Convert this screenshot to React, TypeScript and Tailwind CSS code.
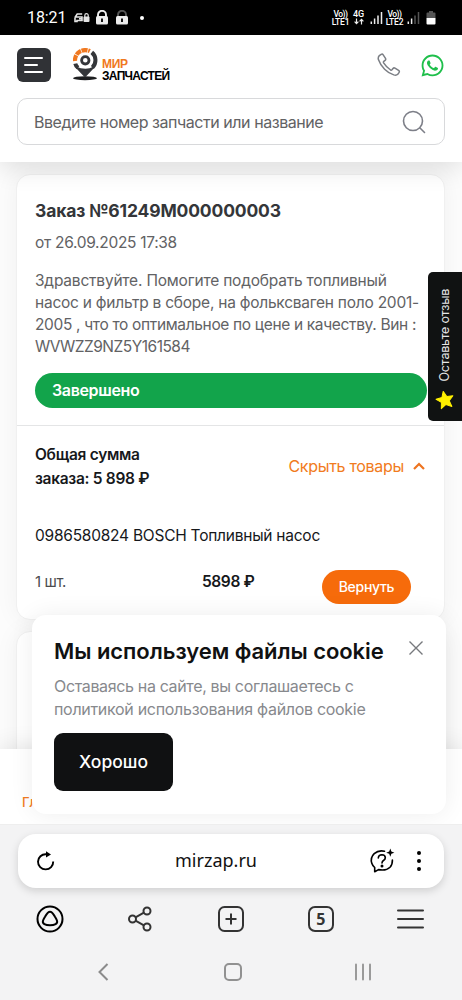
import { FaWhatsapp } from "react-icons/fa"

function StatusBar() {
	return (
		<div className="flex h-[35px] shrink-0 items-center bg-black pl-[27px] text-white">
			<span className="w-[47px] font-['Roboto'] text-[16px] leading-[20px] tracking-[-0.1px]">18:21</span>
			<svg width="16" height="12" viewBox="0 0 16 12" className="mt-[1px]">
				<path d="M1 5.500 3.200 2h5M1 5.500v4h2v-1h5V5H1.500M5 6.700h3" fill="none" stroke="#e5e5e5" strokeWidth="1.600" />
				<rect x="9.500" y="4.500" width="6" height="5.500" rx="1" fill="#e5e5e5" />
				<path d="M10.800 5V3.400a1.700 1.700 0 0 1 3.400 0V5" fill="none" stroke="#e5e5e5" strokeWidth="1.200" />
			</svg>
			<Lock className="ml-[5px]" shackle="#eee" />
			<Lock className="ml-[6px]" shackle="#555" />
			<span className="ml-[11px] size-[4px] rounded-full bg-white" />
			<div className="ml-[188px] flex items-center">
				<Lte top="Vo))" bottom="LTE1" />
				<div className="ml-[4px] flex w-[11px] flex-col items-center font-['Roboto'] text-[9px] leading-[8px] font-medium">
					<span>4G</span>
					<svg width="10" height="7" viewBox="0 0 10 7" fill="none" stroke="#eee" strokeWidth="1.200">
						<path d="M2.500.5v5M.6 3.700l1.900 2 1.900-2M7.500 6.500v-5M5.600 3.300l1.900-2 1.900 2" />
					</svg>
				</div>
				<Signal className="ml-[6px]" weak={false} />
				<Lte top="Vo))" bottom="LTE2" className="ml-[3px]" />
				<Signal className="ml-[4px]" weak />
				<svg width="10" height="14" viewBox="0 0 10 14" className="ml-[6px]">
					<path d="M3 0h4v1.500h1.500q1 0 1 1V7H.5V2.500q0-1 1-1H3z" fill="#555" />
					<path d="M.5 7h9v5.500q0 1-1 1h-7q-1 0-1-1z" fill="#fff" />
				</svg>
			</div>
		</div>
	)
}

function Lock({ className, shackle }: { className: string; shackle: string }) {
	return (
		<svg width="14" height="15" viewBox="0 0 14 15" className={className}>
			<path d="M3 7V4.800a4 4 0 0 1 8 0V7" fill="none" stroke={shackle} strokeWidth="1.900" />
			<rect x="1" y="6" width="12" height="8.500" rx="1.500" fill="#eee" />
			<path d="M7 8.500v3.500" stroke="#000" strokeWidth="1.800" />
		</svg>
	)
}

function Lte({ top, bottom, className = "" }: { top: string; bottom: string; className?: string }) {
	return (
		<div className={`${className} flex w-[17px] flex-col items-center font-['Roboto'] text-[8.5px] leading-[8px] font-medium whitespace-nowrap`}>
			<span className="tracking-[-0.5px]">{top}</span>
			<span className="tracking-[-0.2px]">{bottom}</span>
		</div>
	)
}

function Signal({ weak, className }: { weak: boolean; className: string }) {
	const dim = weak ? "#555" : "#eee"
	return (
		<svg width="13" height="14" viewBox="0 0 13 14" className={className}>
			<path d="M1.300 10.500V13M4.600 7.500V13" stroke="#eee" strokeWidth="1.500" />
			<path d="M8 4.500V13M11.500 1V13" stroke={dim} strokeWidth="1.500" />
		</svg>
	)
}

function Logo() {
	return (
		<svg width="26" height="34" viewBox="0 0 26 34" className="ml-[22px]">
			<ellipse cx="12" cy="30.200" rx="12" ry="2" fill="#1d1e20" />
			<path d="M3.500 19.500 12 28.500l8.500-9Q17 21.500 12.500 21.500 7 21.500 3.500 19.500z" fill="#34363a" stroke="#34363a" strokeWidth="1.500" />
			<path d="M18.800 4.400A10.200 10.200 0 0 1 19.400 19.500" fill="none" stroke="#34363a" strokeWidth="4" />
			<path d="M5 19.800Q2.800 18 2.300 15.600" fill="none" stroke="#34363a" strokeWidth="4" />
			<path d="M2 13A10.200 10.200 0 0 1 16.800 3.200" fill="none" stroke="#f07820" strokeWidth="4.200" strokeDasharray="5.800 .7" />
			<circle cx="12.300" cy="12.300" r="3.700" fill="none" stroke="#34363a" strokeWidth="2.800" />
		</svg>
	)
}

function Header() {
	return (
		<header className="relative z-10 h-[127px] shrink-0 bg-white px-[17px] pt-[13px] shadow-[0_6px_24px_rgba(0,0,0,0.12)]">
			<div className="flex h-[34px] items-center">
				<button className="flex size-[34px] flex-col justify-center gap-[5px] rounded-[6px] bg-[#303236] pl-[7px]">
					<span className="h-[2px] w-[19px] rounded bg-white" />
					<span className="h-[2px] w-[14px] rounded bg-white" />
					<span className="h-[2px] w-[19px] rounded bg-white" />
				</button>
				<Logo />
				<div className="mt-[10px] ml-[3px] font-['Liberation_Sans'] text-[12px] leading-[12px] font-bold">
					<div className="tracking-[-0.3px] text-[#f07820]">МИР</div>
					<div className="tracking-[-0.7px] text-black">ЗАПЧАСТЕЙ</div>
				</div>
				<svg width="24" height="24" viewBox="0 0 24 24" className="ml-auto" fill="none" stroke="#7b7e84" strokeWidth="1.500" strokeLinejoin="round">
					<path d="M2.300 2.600 4.200 1.300q1.200-.7 2 .5l2.300 3.600q.6 1.200-.4 2l-1.300 1q-.6.6-.2 1.400 2.800 4.300 7 7.200.8.4 1.400-.2l1-1.300q.8-1 2-.4l3.600 2.300q1.200.8.5 2l-1.300 1.900q-1.400 1.300-4 .6-5-1.500-9.200-5.700Q3 11.500 1.400 6.600.8 4 2.300 2.600z" />
				</svg>
				<FaWhatsapp className="ml-[19px] size-[25px] text-[#1fbf4b]" />
			</div>
			<div className="mt-[16px] flex h-[47px] items-center justify-between rounded-[10px] border border-[#d8d9db] pr-[18px] pl-[16px]">
				<span className="text-[16px] tracking-[-0.45px] text-[#626264]">Введите номер запчасти или название</span>
				<svg width="24" height="24" viewBox="0 0 24 24" fill="none" stroke="#7d7f88" strokeWidth="1.600" strokeLinecap="round">
					<circle cx="11" cy="11" r="9.500" />
					<path d="m18 18 4.500 4.500" />
				</svg>
			</div>
		</header>
	)
}

function OrderCard() {
	return (
		<section className="-ml-px h-[446px] shrink-0 rounded-[14px] border border-[#f0f0f0] bg-white shadow-[0_0_24px_rgba(0,0,0,0.05)]">
			<div className="h-[251px] border-b border-[#e4e5e6] pr-[17px] pl-[18px] pt-[23px]">
				<h1 className="text-[17.5px] leading-[26px] font-bold tracking-[-0.15px] whitespace-nowrap text-[#343639]">Заказ №61249M000000003</h1>
				<p className="mt-[7px] text-[15.5px] leading-[24px] tracking-[-0.3px] text-[#626264]">от 26.09.2025 17:38</p>
				<p className="mt-[15px] text-[15.5px] leading-[22px] tracking-[-0.2px] whitespace-nowrap text-[#626264]">
					Здравствуйте. Помогите подобрать топливный<br />
					<span className="tracking-[-0.24px]">насос и фильтр в сборе, на фольксваген поло 2001-</span><br />
					<span className="tracking-[-0.34px]">2005 , что то оптимальное по цене и качеству. Вин :</span><br />
					<span className="tracking-[-0.5px]">WVWZZ9NZ5Y161584</span>
				</p>
				<div className="mt-[15px] flex h-[35px] items-center rounded-full bg-[#12a44b] pb-px pl-[17px] text-[16px] font-semibold tracking-[-0.35px] text-white">Завершено</div>
			</div>
			<div className="pt-[17px] pr-[17px] pl-[18px] text-[#16181b]">
				<div className="flex items-center justify-between">
					<p className="text-[15.5px] leading-[24px] font-semibold tracking-[-0.3px]">Общая сумма<br />заказа: 5 898 ₽</p>
					<button className="-mt-[2px] flex items-center gap-[9px] pr-[2px] text-[16px] tracking-[-0.3px] text-[#f17b20]">
						Скрыть товары
						<svg width="12" height="8" viewBox="0 0 12 8" fill="none" stroke="#ee7420" strokeWidth="2.200"><path d="m1 7 5-5 5 5" /></svg>
					</button>
				</div>
				<p className="mt-[33px] text-[15.5px] leading-[24px] tracking-[-0.24px] whitespace-nowrap">0986580824 BOSCH Топливный насос</p>
				<div className="mt-[22px] flex h-[34px]">
					<span className="w-[167px] pt-px text-[15px] leading-[22px] tracking-[-0.4px] text-[#4c4c4e]">1 шт.</span>
					<span className="w-[120px] pt-px text-[15.5px] leading-[22px] font-semibold tracking-[-0.4px]">5898 ₽</span>
					<button className="h-[34px] w-[89px] rounded-full bg-[#f66b0b] pb-[2px] text-[14px] font-medium tracking-[-0.3px] text-white">Вернуть</button>
				</div>
			</div>
		</section>
	)
}

function CookieNotice() {
	return (
		<div className="absolute top-[615px] left-[32px] z-20 h-[199px] w-[414px] rounded-[14px] bg-white pt-[19px] pl-[22px] shadow-[0_0_24px_rgba(0,0,0,0.07)]">
			<h2 className="text-[22px] leading-[34px] font-semibold tracking-[-0.05px] whitespace-nowrap text-[#101112]">Мы используем файлы cookie</h2>
			<p className="mt-[7px] text-[16px] leading-[23px] tracking-[-0.3px] whitespace-nowrap text-[#87898d]">
				<span className="tracking-[-0.35px]">Оставаясь на сайте, вы соглашаетесь с</span><br />политикой использования файлов cookie
			</p>
			<button className="mt-[12px] h-[58px] w-[119px] rounded-[9px] bg-[#101112] text-[17.5px] font-medium text-white">Хорошо</button>
			<svg width="14" height="14" viewBox="0 0 14 14" className="absolute top-[26px] right-[23px]" stroke="#77797d" strokeWidth="1.400"><path d="m.5.5 13 13M13.500.5l-13 13" /></svg>
		</div>
	)
}

function ReviewTab() {
	return (
		<div className="absolute top-[272px] right-0 z-20 flex h-[149px] w-[34px] flex-col items-center justify-end gap-[8px] rounded-l-[5px] bg-[#101212] pb-[11px]">
			<span className="rotate-180 text-[12.5px] leading-[16px] tracking-[-0.2px] whitespace-nowrap text-[#e8e8e8] [writing-mode:vertical-rl]">Оставьте отзыв</span>
			<svg width="20" height="20" viewBox="0 0 20 20" className="-rotate-12" fill="#fff000" stroke="#fff000" strokeWidth="1" strokeLinejoin="round">
				<path d="m10 1.200 2.500 5.700 6.100.6-4.600 4.100 1.400 6.100L10 14.500l-5.400 3.200L6 11.600 1.400 7.500l6.100-.6z" />
			</svg>
		</div>
	)
}

function BrowserBar() {
	return (
		<footer className="relative z-30 flex h-[176px] shrink-0 flex-col border-t border-[#eeeeee] bg-[#f3f3f4] px-[18px] pt-[9px]">
			<div className="grid h-[54px] grid-cols-[50px_1fr_50px_24px_13px] items-center rounded-[18px] bg-white shadow-[0_3px_8px_rgba(0,0,0,0.15)]">
				<svg width="20" height="20" viewBox="0 0 20 20" className="ml-[18px]" fill="none" stroke="#000" strokeWidth="1.900">
					<path d="M17.200 10.500A7.600 7.600 0 1 1 10 3.200h2" />
					<path d="m10 .3 5 3.200-5 2.900z" fill="#000" stroke="none" />
				</svg>
				<span className="pr-px pb-[3px] pl-[8px] text-center font-['Noto_Sans'] text-[18px] leading-[24px] text-[#111]">mirzap.ru</span>
				<svg width="26" height="26" viewBox="0 0 26 26" className="ml-[12px]" fill="none" stroke="#000" strokeWidth="1.600" strokeLinecap="round" strokeLinejoin="round">
					<path d="M15.500 3.200Q9.500 1.800 5.200 5.600 1 9.800 2.800 15.200 3.500 17.500 5.700 19.500v4.300l3.800-2.200q7.500 1.600 11.500-2.400 2.600-2.800 2.400-7.200" />
					<path d="M9.300 10q.2-3.300 3.600-3.300 3.400.1 3.400 3.100 0 1.700-1.800 2.700-1.400.8-1.500 2.500" />
					<circle cx="13" cy="18" r=".7" fill="#000" />
					<path d="m21.300.6 1.100 3 3 1.100-3 1.100-1.100 3-1.100-3-3-1.100 3-1.100z" fill="#000" stroke="none" />
				</svg>
				<div className="ml-[10px] flex w-[4px] flex-col gap-[4px]">
					<span className="size-[4px] rounded-full bg-black" />
					<span className="size-[4px] rounded-full bg-black" />
					<span className="size-[4px] rounded-full bg-black" />
				</div>
			</div>
			<div className="mt-[17px] flex h-[28px] items-center justify-between pr-[20px] pl-[18px]">
				<svg width="28" height="28" viewBox="0 0 28 28" fill="none" stroke="#000" strokeWidth="2">
					<circle cx="14" cy="14" r="12.500" />
					<path d="M14 6.800c2.200 0 3 1.500 5 5 2 3.300 3.400 5.800.6 7.300-2.600 1.400-8.600 1.400-11.200 0-2.800-1.500-1.400-4 .6-7.300 2-3.500 2.800-5 5-5z" />
				</svg>
				<svg width="26" height="26" viewBox="0 0 26 26" fill="none" stroke="#333" strokeWidth="2">
					<circle cx="5.500" cy="13" r="3.500" /><circle cx="20" cy="5" r="3.500" /><circle cx="20" cy="21" r="3.500" />
					<path d="m8.500 11.300 8.400-4.600M8.500 14.700l8.400 4.600" />
				</svg>
				<svg width="28" height="28" viewBox="0 0 28 28" fill="none" stroke="#333" strokeWidth="2">
					<rect x="2" y="2" width="24" height="24" rx="5.500" />
					<path d="M14 8.500v11M8.500 14h11" />
				</svg>
				<div className="flex h-[26px] w-[26px] items-center justify-center rounded-[7px] border-2 border-[#333] font-['Noto_Sans'] text-[16px] leading-[20px] font-bold text-[#333]">5</div>
				<svg width="27" height="22" viewBox="0 0 27 22" stroke="#333" strokeWidth="2" strokeLinecap="round"><path d="M1 2.500h25M1 11h25M1 19.500h25" /></svg>
			</div>
			<div className="mt-[30px] flex items-center pl-[80px]">
				<svg width="11" height="18" viewBox="0 0 11 18" fill="none" stroke="#8b8b8b" strokeWidth="2"><path d="m9.500 1-8 8 8 8" /></svg>
				<span className="ml-[115px] size-[18px] rounded-[5px] border-2 border-[#919191]" />
				<svg width="18" height="18" viewBox="0 0 18 18" className="ml-[112px]" stroke="#919191" strokeWidth="1.800" strokeLinecap="round"><path d="M2 1.500v15M9 1.500v15M16 1.500v15" /></svg>
			</div>
		</footer>
	)
}

export default function App() {
	return (
		<div className="relative flex h-[1000px] w-[462px] flex-col overflow-hidden bg-white font-['Inter',sans-serif]">
			<StatusBar />
			<Header />
			<main className="flex min-h-0 flex-1 flex-col gap-[11px] overflow-hidden bg-[#fcfcfc] px-[17px] pt-[12px]">
				<OrderCard />
				<section className="-ml-px h-[160px] shrink-0 rounded-[14px] border border-[#f0f0f0] bg-white shadow-[0_0_24px_rgba(0,0,0,0.05)]" />
			</main>
			<nav className="relative z-10 h-[75px] shrink-0 bg-white pt-[45px] pl-[22px] text-[13px] leading-[16px] font-medium text-[#f17b20] shadow-[0_0_24px_rgba(0,0,0,0.12)]">Главная</nav>
			<BrowserBar />
			<ReviewTab />
			<CookieNotice />
		</div>
	)
}
